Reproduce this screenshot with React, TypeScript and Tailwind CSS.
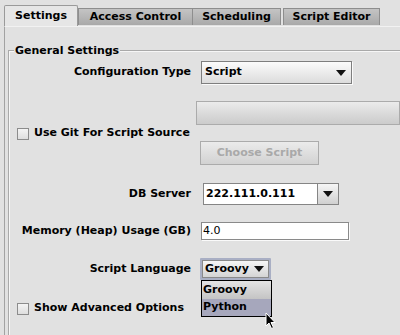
import React from "react";

const font = { fontFamily: '"DejaVu Sans", "Liberation Sans", sans-serif' };

function Arrow() {
  return (
    <svg width="10" height="6" viewBox="0 0 10 6" className="block">
      <polygon points="0,0 10,0 5,6" fill="#111" />
    </svg>
  );
}

function Checkbox() {
  return <div className="w-[12px] h-[12px] border border-[#8c8c8c] bg-gradient-to-b from-[#f4f4f4] to-[#dedede] shrink-0" />;
}

function Label({ children }: { children: React.ReactNode }) {
  return <div className="w-[190px] text-right text-[11px] font-bold text-black">{children}</div>;
}

export default function App() {
  return (
    <div className="w-[400px] h-[335px] bg-[#e1e1e1] overflow-hidden relative text-black" style={font}>
      {/* tabs */}
      <div className="flex items-end pl-[4px] pt-[5px] h-[26px]">
        <div className="w-[74px] h-[21px] bg-[#e6e6e6] border border-b-0 border-[#9a9a9a] rounded-t-[2px] flex items-center justify-center text-[11px] font-bold">
          Settings
        </div>
        <div className="w-[115px] h-[17px] mb-[1px] bg-gradient-to-b from-[#c4c4c4] to-[#a9a9a9] border border-b-0 border-[#8e8e8e] flex items-center justify-center text-[11px] font-bold">
          Access Control
        </div>
        <div className="w-[88px] h-[17px] mb-[1px] bg-gradient-to-b from-[#c4c4c4] to-[#a9a9a9] border border-b-0 border-l-0 border-[#8e8e8e] flex items-center justify-center text-[11px] font-bold">
          Scheduling
        </div>
        <div className="w-[97px] h-[17px] mb-[1px] ml-[2px] bg-gradient-to-b from-[#c4c4c4] to-[#a9a9a9] border border-b-0 border-[#8e8e8e] flex items-center justify-center text-[11px] font-bold">
          Script Editor
        </div>
      </div>
      {/* panel */}
      <div className="ml-[4px] border-l border-t border-[#a2a2a2] border-t-[#f2f2f2] h-[320px] pt-[23px] pl-[3px]">
        <div className="relative border-l border-t border-[#a9a9a9] h-[300px] shadow-[inset_1px_1px_0_#f6f6f6]">
          <div className="absolute left-[5px] top-[-8px] bg-[#e1e1e1] px-[1px] text-[11px] font-bold leading-[15px]">
            General Settings
          </div>
          <div className="flex flex-col ml-[-8px]">
            {/* Config type */}
            <div className="flex items-center mt-[10px] h-[23px]">
              <Label>Configuration Type</Label>
              <div className="ml-[10px] w-[151px] h-[23px] border border-[#7e7e7e] shadow-[1px_1px_0_#fafafa] bg-gradient-to-b from-[#fbfbfb] to-[#dcdcdc] flex items-center justify-between pl-[3px] pr-[5px] text-[11px] font-bold">
                <span>Script</span>
                <Arrow />
              </div>
            </div>
            {/* empty field */}
            <div className="flex items-center mt-[17px] h-[24px]">
              <div className="w-[190px]" />
              <div className="ml-[10px] w-[210px] h-[24px] border border-[#ababab] bg-gradient-to-b from-[#ebebeb] to-[#cbcbcb]" />
            </div>
            {/* checkbox */}
            <div className="flex items-center mt-[2px] h-[13px] pl-[16px] gap-[5px]">
              <Checkbox />
              <span className="text-[11px] font-bold">Use Git For Script Source</span>
            </div>
            {/* choose script */}
            <div className="flex items-center mt-[1px] h-[24px]">
              <div className="w-[190px]" />
              <div className="ml-[9px] w-[119px] h-[24px] border border-[#ababab] bg-gradient-to-b from-[#ebebeb] to-[#d2d2d2] flex items-center justify-center text-[11px] font-bold text-[#a9a9a9]">
                Choose Script
              </div>
            </div>
            {/* DB server */}
            <div className="flex items-center mt-[18px] h-[22px]">
              <Label>DB Server</Label>
              <div className="ml-[12px] flex h-[22px] border border-[#858585]">
                <div className="w-[113px] bg-white flex items-center pl-[2px] text-[11px] font-bold">222.111.0.111</div>
                <div className="w-[21px] border-l border-[#858585] bg-gradient-to-b from-[#f6f6f6] to-[#d0d0d0] flex items-center justify-center">
                  <Arrow />
                </div>
              </div>
            </div>
            {/* memory */}
            <div className="flex items-center mt-[17px] h-[18px]">
              <Label>Memory (Heap) Usage (GB)</Label>
              <div className="ml-[10px] w-[148px] h-[18px] border border-[#8a8a8a] shadow-[1px_1px_0_#fafafa] bg-white flex items-center pl-[1px] text-[11px]">
                4.0
              </div>
            </div>
            {/* script language */}
            <div className="flex items-center mt-[18px] h-[22px]">
              <Label>Script Language</Label>
              <div className="ml-[9px] w-[71px] h-[22px] border-2 border-[#a9afc4] rounded-[1px]">
                <div className="h-full border border-[#8a8a8a] bg-gradient-to-b from-[#f6f6f6] to-[#d4d4d4] flex items-center justify-between pl-[2px] pr-[4px] text-[11px] font-bold">
                  <span>Groovy</span>
                  <Arrow />
                </div>
              </div>
            </div>
            {/* advanced */}
            <div className="flex items-center mt-[22px] h-[13px] pl-[16px] gap-[5px]">
              <Checkbox />
              <span className="text-[11px] font-bold">Show Advanced Options</span>
            </div>
          </div>
        </div>
      </div>
      {/* popup */}
      <div className="absolute left-[201px] top-[280px] w-[71px] border border-black text-[11px] font-bold">
        <div className="h-[18px] bg-gradient-to-b from-[#e4e4e4] to-[#c4c4c4] flex items-center pl-[1px]">Groovy</div>
        <div className="h-[17px] bg-[#a6a7bc] flex items-center pl-[1px]">Python</div>
      </div>
      {/* cursor */}
      <svg className="absolute left-[265px] top-[312px]" width="12" height="18" viewBox="0 0 12 18">
        <path d="M1 1 L1 14 L4 11 L6.5 16.5 L8.5 15.5 L6 10.5 L10 10.5 Z" fill="#000" stroke="#fff" strokeWidth="1" />
      </svg>
    </div>
  );
}
